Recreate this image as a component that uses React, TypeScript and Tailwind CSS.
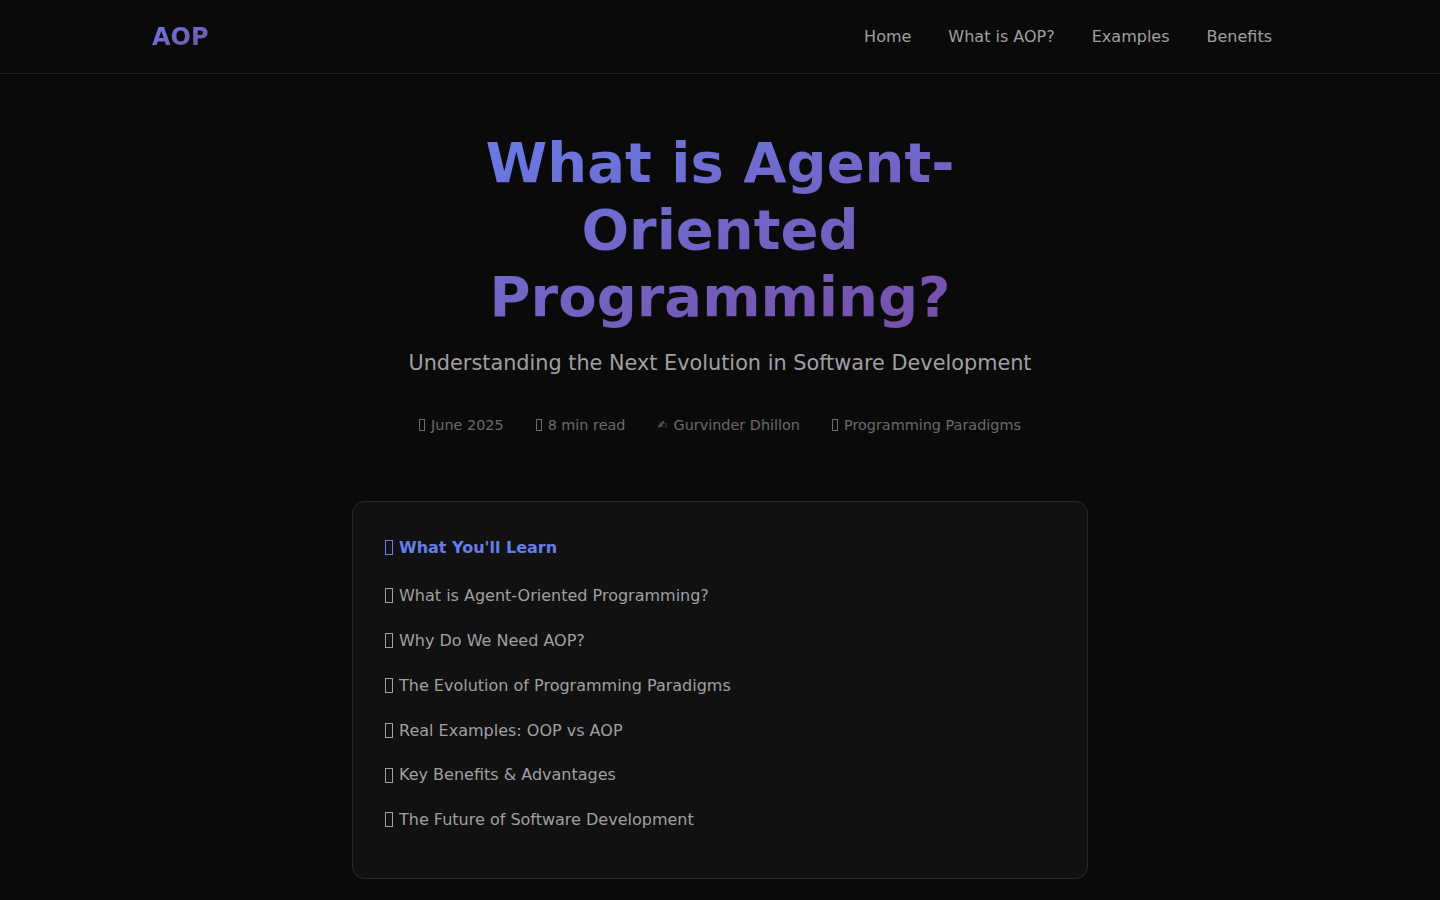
const navLinks = ['Home', 'What is AOP?', 'Examples', 'Benefits']

const meta = ['June 2025', '8 min read', 'Gurvinder Dhillon', 'Programming Paradigms']

const toc = [
  'What is Agent-Oriented Programming?',
  'Why Do We Need AOP?',
  'The Evolution of Programming Paradigms',
  'Real Examples: OOP vs AOP',
  'Key Benefits & Advantages',
  'The Future of Software Development',
]

// missing-glyph box, the way the emoji fall back in the original
function Tofu({ className }: { className: string }) {
  return <span className={`inline-block border border-current align-[-2px] ${className}`} />
}

export default function App() {
  return (
    <div className="min-h-screen bg-[#0a0a0a] font-['DejaVu_Sans',sans-serif] text-[#e0e0e0]">
      {/* header */}
      <header className="border-b border-[#1f1f1f]">
        <div className="mx-auto flex h-[73px] max-w-[1200px] items-center justify-between pl-8 pr-12">
          <a className="bg-gradient-to-br from-[#667eea] to-[#764ba2] bg-clip-text text-2xl font-bold text-transparent">
            AOP
          </a>
          <nav className="flex gap-[37px] text-base text-[#a0a0a0]">
            {navLinks.map((l) => (
              <a key={l}>{l}</a>
            ))}
          </nav>
        </div>
      </header>

      {/* hero */}
      <section className="flex flex-col items-center px-8 pt-[55px] text-center">
        <h1 className="max-w-[600px] bg-gradient-to-br from-[#667eea] to-[#764ba2] bg-clip-text text-[56px] font-bold leading-[1.2] text-transparent">
          What is Agent-Oriented Programming?
        </h1>
        <p className="mt-4 text-[20.8px] leading-8 text-[#a0a0a0]">
          Understanding the Next Evolution in Software Development
        </p>
        <div className="mt-[35px] flex gap-8 text-[14.4px] leading-[22px] text-[#6b6b6b]">
          {meta.map((m, i) => (
            <span key={m} className="flex items-center gap-[6px]">
              {i === 2 ? <span className="text-[12px]">✍&#xFE0E;</span> : <Tofu className="h-[12px] w-[6px]" />}
              {m}
            </span>
          ))}
        </div>
      </section>

      {/* table of contents */}
      <div className="mx-auto mt-[65px] w-[736px] rounded-xl border border-[#2a2a2a] bg-[#111111] px-8 pb-[36px] pt-[33px]">
        <h3 className="flex items-center gap-[6px] text-base font-bold leading-[26px] text-[#667eea]">
          <Tofu className="h-[15px] w-[8px]" />
          What You'll Learn
        </h3>
        <ul className="mt-[13px]">
          {toc.map((t) => (
            <li key={t} className="flex items-center gap-[6px] py-[9.6px] text-base leading-[25.6px] text-[#a0a0a0]">
              <Tofu className="h-[15px] w-[8px]" />
              {t}
            </li>
          ))}
        </ul>
      </div>
    </div>
  )
}
